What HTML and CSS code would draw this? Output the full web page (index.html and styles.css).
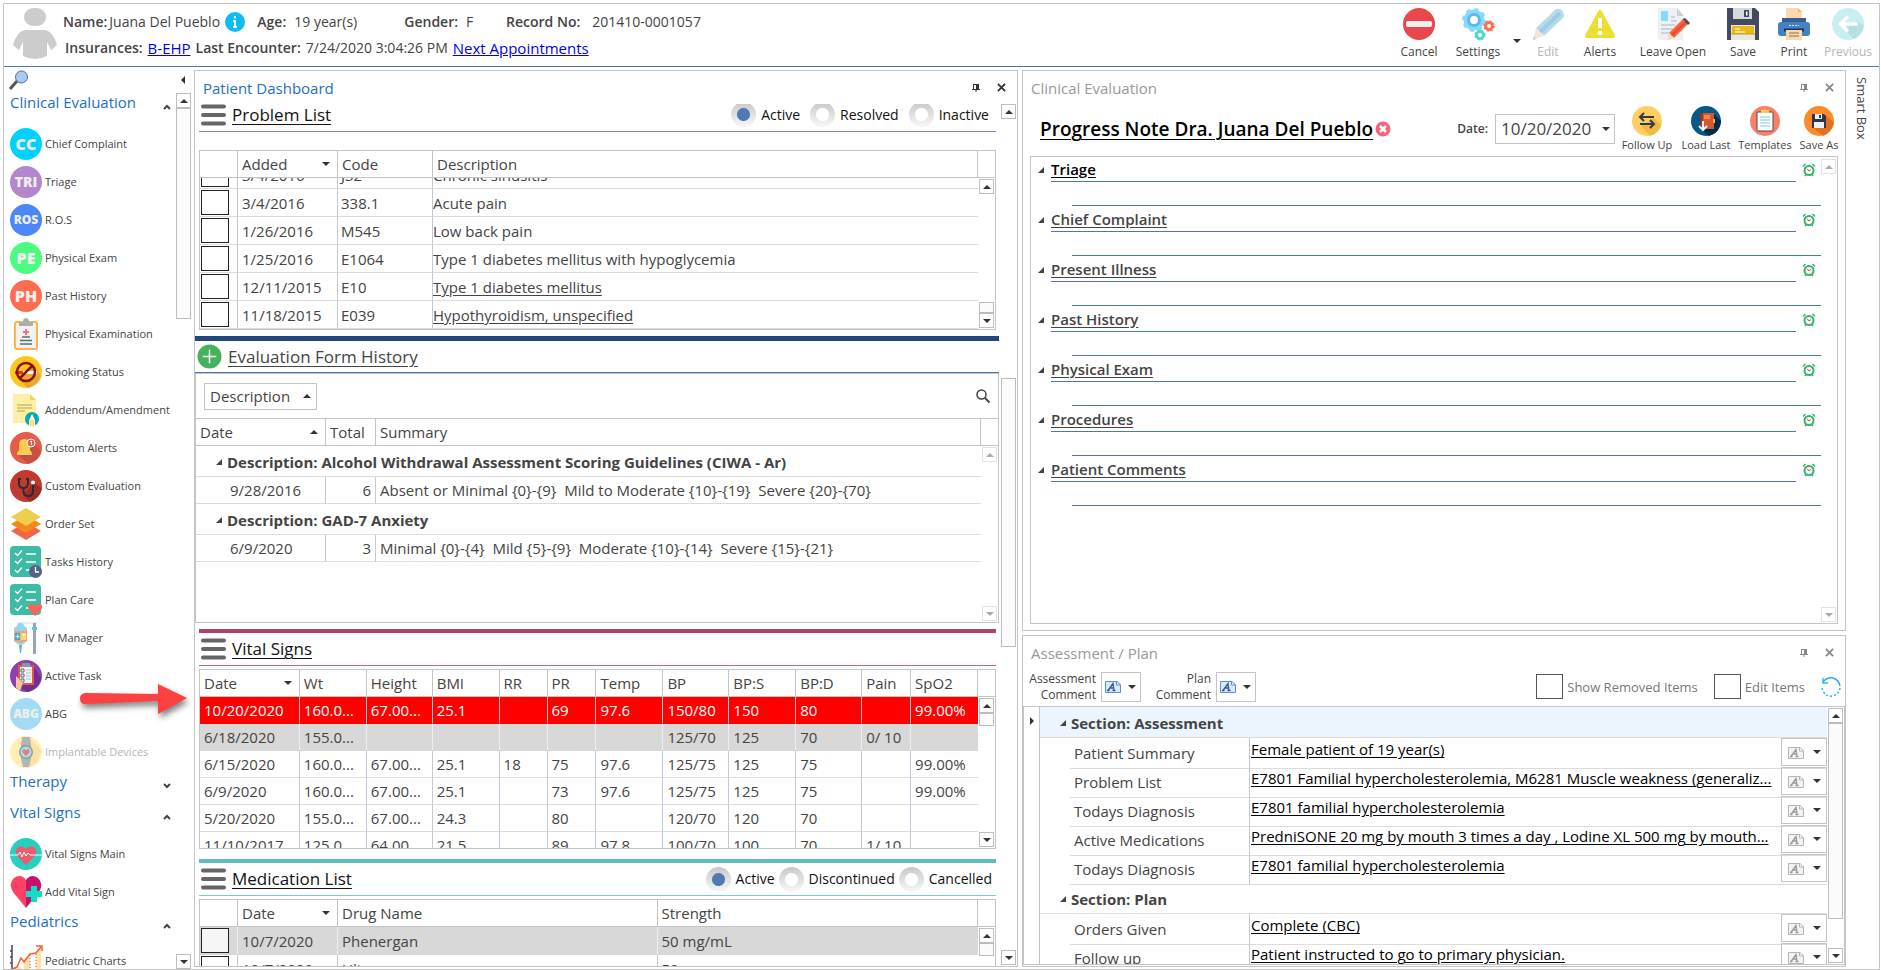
FILE: index.html
```html
<!doctype html>
<html lang="en">
  <head>
    <meta charset="UTF-8" />
    <meta name="viewport" content="width=device-width, initial-scale=1.0" />
    <title>Patient Dashboard</title>
    <link rel="stylesheet" href="styles.css">
  </head>
  <body>
    <!-- Shared icons -->
    <svg class="sprite" aria-hidden="true">
      <symbol id="i-up" viewBox="0 0 8 4"><path d="M0 4L4 0L8 4Z" /></symbol>
      <symbol id="i-down" viewBox="0 0 8 4"><path d="M0 0H8L4 4Z" /></symbol>
      <symbol id="i-open" viewBox="0 0 7 7"><path d="M7 0V7H0Z" /></symbol>
      <symbol id="i-chev-up" viewBox="0 0 8 6"><path d="M1 5L4 2L7 5" fill="none" stroke="#444" stroke-width="2" /></symbol>
      <symbol id="i-chev-down" viewBox="0 0 8 6"><path d="M1 1L4 4L7 1" fill="none" stroke="#444" stroke-width="2" /></symbol>
      <symbol id="i-pin" viewBox="0 0 8 8"><path d="M1 0H7V5H8V6H4.5V8H3.5V6H0V5H1ZM2 1V5H4V1Z" fill="currentColor" fill-rule="evenodd" /></symbol>
      <symbol id="i-close" viewBox="0 0 10 10"><path d="M1 1L9 9M9 1L1 9" stroke="currentColor" stroke-width="2" /></symbol>
      <symbol id="i-menu" viewBox="0 0 25 22"><path d="M2 2.500H23M2 11H23M2 19.500H23" stroke="#666" stroke-width="4" stroke-linecap="round" /></symbol>
      <symbol id="i-clock" viewBox="0 0 14 14">
        <circle cx="7" cy="7.500" r="4.500" fill="#fff" stroke="#35b56a" stroke-width="2" />
        <path d="M1 3.500L3.500 1M10.500 1L13 3.500M3 13L4 11.500M11 13L10 11.500" stroke="#35b56a" stroke-width="1.500" />
        <path d="M5 5.500L7 8L9 6.500" fill="none" stroke="#d9483b" />
      </symbol>
      <symbol id="i-text" viewBox="0 0 16 13">
        <path d="M.5 1.500H11.500L15.500 5V12.500H.5Z" fill="#dbe8fb" stroke="#5d8fd0" />
        <path d="M11.500 1V5H15.500Z" fill="#fff" stroke="#5d8fd0" />
        <path d="M3 10.500L8 3.500L9 10.500M5 8H8.500M2 10.500H4.500M7.500 10.500H10.500" fill="none" stroke="#31599a" stroke-width="1.300" />
      </symbol>
      <symbol id="i-text-off" viewBox="0 0 16 13">
        <path d="M.5 1.500H11.500L15.500 5V12.500H.5Z" fill="#f3f3f3" stroke="#b5b5b5" />
        <path d="M11.500 1V5H15.500Z" fill="#fff" stroke="#b5b5b5" />
        <path d="M3 10.500L8 3.500L9 10.500M5 8H8.500M2 10.500H4.500M7.500 10.500H10.500" fill="none" stroke="#999" stroke-width="1.300" />
      </symbol>
      <symbol id="i-tasks" viewBox="0 0 32 32">
        <rect width="31" height="31" rx="4" fill="#3ebba5" />
        <path d="M5 7L7.500 9.500L12 4.500M5 15L7.500 17.500L12 12.500M5 24L7.500 26.500L12 21.500M16 8H26M16 16H26M16 24H22" fill="none" stroke="#fff" stroke-width="1.300" />
      </symbol>
    </svg>

    <div class="app">
      <header class="topbar">
        <svg class="avatar" viewBox="0 0 44 51">
          <rect x="11" y="0" width="22" height="18" rx="9" fill="#ccc" />
          <path d="M12 22H32C38 23 42 30 44 37L38 42L34 34V48Q22 54 10 48V34L6 42L0 37C2 30 6 23 12 22Z" fill="#ccc" />
        </svg>
        <div class="patient">
          <div class="patient-row">
            <b>Name:</b><span class="name-value">Juana Del Pueblo</span>
            <svg class="info" viewBox="0 0 20 20"><circle cx="10" cy="10" r="10" fill="#0bbcf5" /><path d="M10 4V6.500M8 9H10V15M8 15H12" fill="none" stroke="#fff" stroke-width="2" /></svg>
            <b class="age">Age:</b><span class="age-value">19 year(s)</span>
            <b>Gender:</b><span class="gender-value">F</span>
            <b>Record No:</b><span class="record-value">201410-0001057</span>
          </div>
          <div class="patient-row wide">
            <b>Insurances:</b><a href="#">B-EHP</a>
            <b class="encounter">Last Encounter:</b><span>7/24/2020 3:04:26 PM</span>
            <a href="#">Next Appointments</a>
          </div>
        </div>
        <nav class="toolbar">
          <button class="tool w60">
            <svg viewBox="0 0 32 32"><circle cx="16" cy="16" r="16" fill="#e9474b" /><rect x="3" y="13" width="26" height="6" rx="2" fill="#f1efef" /></svg>
            Cancel
          </button>
          <button class="tool w58">
            <svg viewBox="0 0 32 32">
              <circle cx="12" cy="12" r="10.500" fill="#84dbff" /><circle cx="12" cy="12" r="10.500" fill="none" stroke="#84dbff" stroke-width="3" stroke-dasharray="4 4.250" />
              <circle cx="12" cy="12" r="5.500" fill="#fff" stroke="#5cb8ec" stroke-width="3" />
              <circle cx="27" cy="18" r="3.500" fill="#fff" stroke="#fc6f58" stroke-width="3" /><circle cx="27" cy="18" r="5" fill="none" stroke="#fc6f58" stroke-width="1.500" stroke-dasharray="2 1.900" />
              <circle cx="18" cy="27" r="3.500" fill="#fff" stroke="#4ddcc3" stroke-width="3" /><circle cx="18" cy="27" r="4.800" fill="none" stroke="#4ddcc3" stroke-width="1.500" stroke-dasharray="2 1.900" />
            </svg>
            Settings
          </button>
          <button class="tool-caret" aria-label="More settings"><svg class="tri"><use href="#i-down" /></svg></button>
          <button class="tool w42" disabled>
            <svg viewBox="0 0 32 32"><path d="M24 1Q29 0 31 4Q33 8 31 10L12 28L4 20Z" fill="#b3dbec" /><path d="M8 24L28 5" stroke="#9ecde3" stroke-width="4" /><path d="M4 20L12 28L1 32Z" fill="#f8e3dc" /><path d="M1 32L2 28L4 31Z" fill="#c5cdd5" /></svg>
            Edit
          </button>
          <button class="tool w62">
            <svg viewBox="0 0 32 32"><path d="M16 4L29 28H3Z" fill="#ecdf33" stroke="#ecdf33" stroke-width="4" stroke-linejoin="round" /><path d="M14 10H18V20H14Z" fill="#fff" /><circle cx="16" cy="25" r="2.300" fill="#fff" /></svg>
            Alerts
          </button>
          <button class="tool w84">
            <svg viewBox="0 0 32 32">
              <path d="M1 0H20L26 7V32H1Z" fill="#eef1f4" /><path d="M20 0V8H27Z" fill="#c9d1dc" /><path d="M4 3H11V13H4Z" fill="#84dbff" />
              <path d="M4 17H18M4 21H16M4 25H12M14 13H20M14 9H18" stroke="#bfcad6" stroke-width="1.500" />
              <path d="M12 25L27 10L32 15L17 30Z" fill="#f9623f" /><path d="M14 28L30 13" stroke="#e34c2c" stroke-width="2" /><path d="M12 25L17 30L10 32Z" fill="#fdd7ad" /><path d="M26 11L28 10L33 15L31 17Z" fill="#434a60" />
            </svg>
            Leave Open
          </button>
          <button class="tool w56">
            <svg viewBox="0 0 32 32"><path d="M0 0H28L32 4V32H0Z" fill="#434a60" /><path d="M6 0H25V11H6Z" fill="#d6dadd" /><path d="M17 2H22V9H17Z" fill="#434a60" /><path d="M19 3.500H20.500V7.500H19Z" fill="#fff" /><path d="M4 17H28V32H4Z" fill="#e8e8e0" /><path d="M5 18H27V26H5Z" fill="#ebb917" /><path d="M8 21H13M8 24H18" stroke="#fff" /><path d="M4 26H28" stroke="#c49a10" /></svg>
            Save
          </button>
          <button class="tool w46">
            <svg viewBox="0 0 32 32"><path d="M8 0H20L24 4V12H8Z" fill="#fdd7ad" /><path d="M20 0V4H24Z" fill="#e9b888" /><path d="M4 10H28V16H4Z" fill="#366095" /><rect y="14" width="32" height="14" rx="3" fill="#4482c3" /><path d="M11 17.500H21" stroke="#cfe2ff" stroke-dasharray="2 1" /><path d="M6 22H26" stroke="#1d3450" stroke-width="3" /><path d="M8 22H24V32H8Z" fill="#fdd7ad" /><path d="M11 25H21M11 28H21" stroke="#8c6d52" /></svg>
            Print
          </button>
          <button class="tool w62" disabled>
            <svg viewBox="0 0 32 32"><circle cx="16" cy="16" r="16" fill="#c9eef1" /><path d="M12 21L22 31Q30 27 32 18L25 13Z" fill="#b4dfe3" /><path d="M26 16H9M16 8.500L8.500 16L16 23.500" fill="none" stroke="#fff" stroke-width="3.500" /></svg>
            Previous
          </button>
        </nav>
      </header>

      <main class="workspace">
        <aside class="sidebar">
          <div class="sidebar-top">
            <svg class="search" viewBox="0 0 20 20"><path d="M1 19L8 11" stroke="#555" stroke-width="3" /><circle cx="12.500" cy="7" r="6" fill="#a5cdf9" stroke="#5b6b80" /></svg>
            <svg class="collapse" viewBox="0 0 4 8"><path d="M4 0V8L0 4Z" fill="#333" /></svg>
          </div>
          <div class="sidebar-body">
            <div class="menu">
              <button class="menu-head first">Clinical Evaluation<svg><use href="#i-chev-up" /></svg></button>
              <ul>
                <li><a href="#"><span class="badge cc">CC</span>Chief Complaint</a></li>
                <li><a href="#"><span class="badge tri-badge">TRI</span>Triage</a></li>
                <li><a href="#"><span class="badge ros">ROS</span>R.O.S</a></li>
                <li><a href="#"><span class="badge pe">PE</span>Physical Exam</a></li>
                <li><a href="#"><span class="badge ph">PH</span>Past History</a></li>
                <li><a href="#">
                  <svg viewBox="0 0 32 32"><rect x="5" y="4" width="22" height="27" rx="2" fill="#f2f2f2" stroke="#fdb44b" stroke-width="2" /><path d="M9 8V4H13Q13 0 16 0Q19 0 19 4H23V8Z" fill="#a9aeb3" /><path d="M16 11V17M13 14H19" stroke="#f2727f" stroke-width="2" /><path d="M12 19H20M10 22.500H22M10 26H22" stroke="#56707a" stroke-width="1.300" /></svg>
                  Physical Examination</a></li>
                <li><a href="#">
                  <svg viewBox="0 0 32 32"><circle cx="16" cy="16" r="16" fill="#ffc61b" /><path d="M24 9L31 20Q28 29 18 32L9 24Z" fill="#e9a72c" /><path d="M5 15H13V18H5Z" fill="#e2362b" /><path d="M13 15H27V18H13Z" fill="#fff" /><circle cx="16" cy="16" r="9" fill="none" stroke="#8c1010" stroke-width="2.500" /><path d="M10 22L22 10" stroke="#8c1010" stroke-width="2.500" /></svg>
                  Smoking Status</a></li>
                <li><a href="#">
                  <svg viewBox="0 0 32 32"><path d="M3 0H20L26 6V29H3Z" fill="#ffefa6" /><path d="M20 0V6H26Z" fill="#f3d55b" /><path d="M7 11H22M7 14H22M7 17H15" stroke="#b3a250" /><circle cx="22" cy="25" r="7" fill="#08a9a6" /><path d="M19 32V26L22 20L25 26V32Z" fill="#fff" /><path d="M20 26H24V32H20Z" fill="#ffe26a" /></svg>
                  Addendum/Amendment</a></li>
                <li><a href="#">
                  <svg viewBox="0 0 32 32"><circle cx="16" cy="16" r="16" fill="#e35d4a" /><path d="M20 8L31 19Q28 29 18 32L8 23Z" fill="#c94f43" /><path d="M7 23V21L9 18V13Q9 7 14.500 7Q20 7 20 13V18L22 21V23Z" fill="#ffcb4f" /><path d="M12 23H17Q15 27 12 23Z" fill="#5d6a80" /><circle cx="21" cy="11" r="4" fill="#e35d4a" stroke="#fff" /><path d="M20 10L21.500 9V13" fill="none" stroke="#fff" /></svg>
                  Custom Alerts</a></li>
                <li><a href="#">
                  <svg viewBox="0 0 32 32"><circle cx="16" cy="16" r="16" fill="#c13a2f" /><path d="M24 12L32 19Q29 29 20 32L13 25Z" fill="#9d2a25" /><path d="M11 9H9V13Q9 18 13.500 18Q18 18 18 13V9H16M13.500 18V22Q14 26 18.500 26Q23 26 23 21V14" fill="none" stroke="#2b2b33" stroke-width="2" /><circle cx="23" cy="12.500" r="2" fill="#fff" /></svg>
                  Custom Evaluation</a></li>
                <li><a href="#">
                  <svg viewBox="0 0 32 32"><path d="M16 14L31 23L16 32L1 23Z" fill="#f0644a" /><path d="M16 7L31 16L16 25L1 16Z" fill="#f08a1d" /><path d="M16 0L31 9L16 18L1 9Z" fill="#eecf4c" /></svg>
                  Order Set</a></li>
                <li><a href="#">
                  <svg viewBox="0 0 32 32"><use href="#i-tasks" /><circle cx="25.500" cy="25.500" r="6.500" fill="#566084" /><path d="M25.500 21V26H29" fill="none" stroke="#fff" stroke-width="1.300" /></svg>
                  Tasks History</a></li>
                <li><a href="#">
                  <svg viewBox="0 0 32 32"><use href="#i-tasks" /><path d="M25 32L19 26Q16 21 20.500 20Q23.500 19 25 22Q26.500 19 29.500 20Q34 21 31 26Z" fill="#f06a5c" /></svg>
                  Plan Care</a></li>
                <li><a href="#">
                  <svg viewBox="0 0 32 32"><path d="M7 1H28" stroke="#d5dbe0" /><path d="M23 1H26V32H23Z" fill="#9ba5b2" /><path d="M22 5H27V8H22Z" fill="#4cc7ee" /><path d="M7 4Q7 1 10.500 1Q14 1 14 4L17 6V19Q13 23 10.500 23Q8 23 4 19V6Z" fill="#8ed8f2" /><path d="M4 9H17V19Q10 22 4 19Z" fill="#f7a072" /><path d="M5 11H10.500V18H5Z" fill="#36a9d8" /><path d="M10.500 11H16V18H10.500Z" fill="#ffd96a" /><path d="M7.700 12.500V16.500M5.700 14.500H9.700M13 12.500H15" stroke="#fff" /><path d="M9 23H12L11 31H10Z" fill="#54b2da" /></svg>
                  IV Manager</a></li>
                <li><a href="#">
                  <svg viewBox="0 0 32 32"><circle cx="16" cy="16" r="16" fill="#8e3fae" /><path d="M24 7L31 18Q29 28 18 32L9 27Z" fill="#71308e" /><path d="M8 5H24V25H8Z" fill="#e2574c" /><path d="M10 7H22V23H10Z" fill="#f4f4f4" /><path d="M12 3H20V7H12Z" fill="#8b96a3" /><path d="M11 9H14V12H11ZM11 14H14V17H11ZM11 19H14V22H11Z" fill="none" stroke="#566" /><path d="M16 10H21M16 13H21M16 16H21M16 19H21" stroke="#b7bec5" /><path d="M6 16L9 19L13 23L10 31L6 28Z" fill="#f5c59b" /></svg>
                  Active Task</a></li>
                <li><a href="#"><span class="badge abg">ABG</span>ABG</a></li>
                <li><a href="#" class="off">
                  <svg viewBox="0 0 32 32"><circle cx="16" cy="16" r="16" fill="#ffefb3" /><path d="M20 2L31 14Q29 28 19 31Z" fill="#fde0a6" /><path d="M12 1H20L21 9V23L19 31H13L11 23V9Z" fill="#b4b4b4" /><circle cx="16" cy="16" r="7" fill="#92989d" /><circle cx="16" cy="16" r="5.500" fill="#9de4f4" /><path d="M16 20L12.500 16.500Q12 13 14.500 13L16 14.500L17.500 13Q20 13 19.500 16.500Z" fill="#ed7979" /></svg>
                  Implantable Devices</a></li>
              </ul>
              <button class="menu-head therapy">Therapy<svg><use href="#i-chev-down" /></svg></button>
              <button class="menu-head">Vital Signs<svg><use href="#i-chev-up" /></svg></button>
              <ul>
                <li><a href="#">
                  <svg viewBox="0 0 32 32"><circle cx="16" cy="16" r="16" fill="#27cfc0" /><path d="M16 27L8 19Q4 14 7 10Q11 6 16 11Q21 6 25 10Q28 14 24 19Z" fill="#f4596b" /><path d="M0 17H8L10 14L12 19L14 14L16 18L18 15L20 17H32" fill="none" stroke="#e8fdfb" /></svg>
                  Vital Signs Main</a></li>
                <li><a href="#">
                  <svg viewBox="0 0 32 32"><path d="M16 32L3 16Q-2 8 4 2Q11 -3 16 4Z" fill="#ff4164" /><path d="M16 32L29 16Q34 8 28 2Q21 -3 16 4Z" fill="#c5126d" /><path d="M21 10H27V15H32V21H27V26H21V21H16V15H21Z" fill="#0ee0c4" /></svg>
                  Add Vital Sign</a></li>
              </ul>
              <button class="menu-head peds">Pediatrics<svg><use href="#i-chev-up" /></svg></button>
              <ul>
                <li><a href="#">
                  <svg viewBox="0 0 32 32"><path d="M2 32V24L8 20L12 24V32ZM14 32V14L20 9V32ZM26 32V7L31 3V32Z" fill="#ffdfaa" /><path d="M2 0V32M0 6H2M0 12H2M0 18H2" stroke="#445" stroke-width="1.500" /><path d="M3 24L7 22L11 13L14 17L20 9L26 8L31 2M26 1H32V6" fill="none" stroke="#f26238" stroke-width="1.500" /><path d="M20 10V32M26 9V32" stroke="#e45a38" stroke-dasharray="1 2" /></svg>
                  Pediatric Charts</a></li>
              </ul>
            </div>
            <div class="scroll">
              <button aria-label="Scroll up"><svg class="tri"><use href="#i-up" /></svg></button>
              <i class="thumb side-thumb"></i>
              <button class="end" aria-label="Scroll down"><svg class="tri"><use href="#i-down" /></svg></button>
            </div>
          </div>
          <svg class="arrow" viewBox="0 0 112 40"><path d="M5 9Q0 10 0 14Q0 20 5 20L78 17V30L107 14L78 0V10Z" fill="#fb4141" /></svg>
        </aside>

        <section class="panel dashboard">
          <div class="panel-title active">
            <h2>Patient Dashboard</h2>
            <button aria-label="Pin"><svg class="pin"><use href="#i-pin" /></svg></button>
            <button aria-label="Close"><svg class="close"><use href="#i-close" /></svg></button>
          </div>
          <div class="dashboard-body">
            <div class="widgets">
              <section class="widget problems">
                <div class="widget-head violet">
                  <svg class="hamburger"><use href="#i-menu" /></svg>
                  <h3>Problem List</h3>
                  <div class="radios">
                    <label><input type="radio" name="problem" checked>Active</label>
                    <label><input type="radio" name="problem">Resolved</label>
                    <label><input type="radio" name="problem">Inactive</label>
                  </div>
                </div>
                <div class="grid-box problem-box">
                  <table class="grid problem-grid">
                    <thead>
                      <tr><th></th><th>Added<svg class="tri"><use href="#i-down" /></svg></th><th>Code</th><th>Description</th><th></th></tr>
                    </thead>
                    <tbody>
                      <tr><td><input type="checkbox" aria-label="Select"></td><td>3/4/2016</td><td>J32</td><td>Chronic sinusitis</td></tr>
                      <tr><td><input type="checkbox" aria-label="Select"></td><td>3/4/2016</td><td>338.1</td><td>Acute pain</td></tr>
                      <tr><td><input type="checkbox" aria-label="Select"></td><td>1/26/2016</td><td>M545</td><td>Low back pain</td></tr>
                      <tr><td><input type="checkbox" aria-label="Select"></td><td>1/25/2016</td><td>E1064</td><td>Type 1 diabetes mellitus with hypoglycemia</td></tr>
                      <tr><td><input type="checkbox" aria-label="Select"></td><td>12/11/2015</td><td>E10</td><td><u>Type 1 diabetes mellitus</u></td></tr>
                      <tr><td><input type="checkbox" aria-label="Select"></td><td>11/18/2015</td><td>E039</td><td><u>Hypothyroidism, unspecified</u></td></tr>
                    </tbody>
                  </table>
                  <div class="scroll">
                    <button aria-label="Scroll up"><svg class="tri"><use href="#i-up" /></svg></button>
                    <i class="thumb low-thumb"></i>
                    <button aria-label="Scroll down"><svg class="tri"><use href="#i-down" /></svg></button>
                  </div>
                </div>
              </section>

              <section class="widget evaluation">
                <div class="widget-head blue">
                  <svg class="plus" viewBox="0 0 26 26"><circle cx="13" cy="13" r="12.500" fill="#45b25d" /><path d="M13 6V20M6 13H20" stroke="#fff" stroke-width="1.500" /></svg>
                  <h3>Evaluation Form History</h3>
                </div>
                <div class="grid-box eval-box">
                  <div class="group-bar">
                    <button class="group-by">Description<svg class="tri"><use href="#i-up" /></svg></button>
                    <svg class="find" viewBox="0 0 14 14"><circle cx="5.500" cy="5.500" r="4.500" fill="none" stroke="#444" stroke-width="1.500" /><path d="M9 9L13.500 13.500" stroke="#444" stroke-width="2" /></svg>
                  </div>
                  <div class="grid-wrap">
                    <table class="grid eval-grid">
                      <thead>
                        <tr><th>Date<svg class="tri"><use href="#i-up" /></svg></th><th>Total</th><th>Summary</th><th></th></tr>
                      </thead>
                      <tbody>
                        <tr class="group"><th colspan="3"><svg class="open"><use href="#i-open" /></svg>Description: Alcohol Withdrawal Assessment Scoring Guidelines (CIWA - Ar)</th></tr>
                        <tr><td>9/28/2016</td><td>6</td><td>Absent or Minimal {0}-{9}&nbsp; Mild to Moderate {10}-{19}&nbsp; Severe {20}-{70}</td></tr>
                        <tr class="group"><th colspan="3"><svg class="open"><use href="#i-open" /></svg>Description: GAD-7 Anxiety</th></tr>
                        <tr><td>6/9/2020</td><td>3</td><td>Minimal {0}-{4}&nbsp; Mild {5}-{9}&nbsp; Moderate {10}-{14}&nbsp; Severe {15}-{21}</td></tr>
                      </tbody>
                    </table>
                    <div class="scroll off">
                      <button disabled aria-label="Scroll up"><svg class="tri"><use href="#i-up" /></svg></button>
                      <button class="end" disabled aria-label="Scroll down"><svg class="tri"><use href="#i-down" /></svg></button>
                    </div>
                  </div>
                </div>
              </section>

              <section class="widget vitals">
                <div class="widget-head pink">
                  <svg class="hamburger"><use href="#i-menu" /></svg>
                  <h3>Vital Signs</h3>
                </div>
                <div class="grid-box vital-box">
                  <table class="grid vital-grid">
                    <thead>
                      <tr><th>Date<svg class="tri"><use href="#i-down" /></svg></th><th>Wt</th><th>Height</th><th>BMI</th><th>RR</th><th>PR</th><th>Temp</th><th>BP</th><th>BP:S</th><th>BP:D</th><th>Pain</th><th>SpO2</th><th></th></tr>
                    </thead>
                    <tbody>
                      <tr class="alert"><td>10/20/2020</td><td>160.0...</td><td>67.00...</td><td>25.1</td><td></td><td>69</td><td>97.6</td><td>150/80</td><td>150</td><td>80</td><td></td><td>99.00%</td></tr>
                      <tr class="selected"><td>6/18/2020</td><td>155.0...</td><td></td><td></td><td></td><td></td><td></td><td>125/70</td><td>125</td><td>70</td><td>0/ 10</td><td></td></tr>
                      <tr><td>6/15/2020</td><td>160.0...</td><td>67.00...</td><td>25.1</td><td>18</td><td>75</td><td>97.6</td><td>125/75</td><td>125</td><td>75</td><td></td><td>99.00%</td></tr>
                      <tr><td>6/9/2020</td><td>160.0...</td><td>67.00...</td><td>25.1</td><td></td><td>73</td><td>97.6</td><td>125/75</td><td>125</td><td>75</td><td></td><td>99.00%</td></tr>
                      <tr><td>5/20/2020</td><td>155.0...</td><td>67.00...</td><td>24.3</td><td></td><td>80</td><td></td><td>120/70</td><td>120</td><td>70</td><td></td><td></td></tr>
                      <tr><td>11/10/2017</td><td>125.0...</td><td>64.00...</td><td>21.5</td><td></td><td>89</td><td>97.8</td><td>100/70</td><td>100</td><td>70</td><td>1/ 10</td><td></td></tr>
                    </tbody>
                  </table>
                  <div class="scroll">
                    <button aria-label="Scroll up"><svg class="tri"><use href="#i-up" /></svg></button>
                    <i class="thumb short-thumb"></i>
                    <button class="end" aria-label="Scroll down"><svg class="tri"><use href="#i-down" /></svg></button>
                  </div>
                </div>
              </section>

              <section class="widget medication">
                <div class="widget-head teal">
                  <svg class="hamburger"><use href="#i-menu" /></svg>
                  <h3>Medication List</h3>
                  <div class="radios tight">
                    <label><input type="radio" name="medication" checked>Active</label>
                    <label><input type="radio" name="medication">Discontinued</label>
                    <label><input type="radio" name="medication">Cancelled</label>
                  </div>
                </div>
                <div class="grid-box med-box">
                  <table class="grid med-grid">
                    <thead>
                      <tr><th></th><th>Date<svg class="tri"><use href="#i-down" /></svg></th><th>Drug Name</th><th>Strength</th><th></th></tr>
                    </thead>
                    <tbody>
                      <tr class="selected"><td><input type="checkbox" aria-label="Select"></td><td>10/7/2020</td><td>Phenergan</td><td>50 mg/mL</td></tr>
                      <tr><td><input type="checkbox" aria-label="Select"></td><td>10/7/2020</td><td>Ultram</td><td>50 mg</td></tr>
                    </tbody>
                  </table>
                  <div class="scroll">
                    <button aria-label="Scroll up"><svg class="tri"><use href="#i-up" /></svg></button>
                    <i class="thumb short-thumb"></i>
                  </div>
                </div>
              </section>
            </div>
            <div class="scroll">
              <button aria-label="Scroll up"><svg class="tri"><use href="#i-up" /></svg></button>
              <i class="thumb dash-thumb"></i>
              <button class="end" aria-label="Scroll down"><svg class="tri"><use href="#i-down" /></svg></button>
            </div>
          </div>
        </section>

        <div class="right">
          <section class="panel note">
            <div class="panel-title">
              <h2>Clinical Evaluation</h2>
              <button aria-label="Pin"><svg class="pin"><use href="#i-pin" /></svg></button>
              <button aria-label="Close"><svg class="close"><use href="#i-close" /></svg></button>
            </div>
            <div class="note-head">
              <h1>Progress Note Dra. Juana Del Pueblo</h1>
              <svg class="remove" viewBox="0 0 16 16"><circle cx="8" cy="8" r="7.500" fill="#fb6179" /><path d="M5 5L11 11M11 5L5 11" stroke="#fff" stroke-width="2.500" /></svg>
              <label class="date-label" for="note-date">Date:</label>
              <div class="date-field">
                <select id="note-date"><option>10/20/2020</option></select>
                <svg class="tri"><use href="#i-down" /></svg>
              </div>
              <div class="note-tools">
                <button class="mini w60">
                  <svg viewBox="0 0 30 30"><circle cx="15" cy="15" r="15" fill="#ffd061" /><path d="M22 12L29 19Q27 27 18 30L9 20Z" fill="#f0b844" /><path d="M22 11H9M12 7L8 11L12 15M8 18H21M18 14L22 18L18 22" fill="none" stroke="#30384c" stroke-width="2" /></svg>
                  Follow Up
                </button>
                <button class="mini w58">
                  <svg viewBox="0 0 30 30"><circle cx="15" cy="15" r="15" fill="#035a83" /><path d="M22 7L30 15Q29 27 18 30L9 23Z" fill="#022d48" /><path d="M10 7H23V23H10Z" fill="#d45833" /><path d="M9 7H12V23H9Z" fill="#8e3a25" /><path d="M13 10H19M13 12H19" stroke="#ffc94f" /><path d="M23 13V17" stroke="#f0b844" stroke-width="2" /><path d="M12 15V24M8 20L12 24L16 20" fill="none" stroke="#e8f6ff" stroke-width="2" /></svg>
                  Load Last
                </button>
                <button class="mini w60">
                  <svg viewBox="0 0 30 30"><circle cx="15" cy="15" r="15" fill="#fb8068" /><rect x="7" y="6" width="16" height="19" rx="1" fill="#fff" stroke="#454b59" /><path d="M11 7V4H14L15 2L16 4H19V7Z" fill="#ffc94f" /><path d="M10 11H20M10 14H20M10 17H20M10 20H20" stroke="#a9daf2" stroke-width="1.500" /></svg>
                  Templates
                </button>
                <button class="mini w48">
                  <svg viewBox="0 0 30 30"><circle cx="15" cy="15" r="15" fill="#fd8b2c" /><path d="M22 9L30 17Q27 27 19 30L9 22Z" fill="#e2701c" /><path d="M8 8H20L22 10V22H8Z" fill="#303848" /><path d="M11 8H18V13H11ZM10 16H20V22H10Z" fill="#eef2f5" /><path d="M15 9H17V12H15Z" fill="#303848" /></svg>
                  Save As
                </button>
              </div>
            </div>
            <div class="note-body">
              <ul class="sections">
                <li class="current"><div><svg class="open"><use href="#i-open" /></svg><a href="#">Triage</a><svg class="clock"><use href="#i-clock" /></svg></div></li>
                <li><div><svg class="open"><use href="#i-open" /></svg><a href="#">Chief Complaint</a><svg class="clock"><use href="#i-clock" /></svg></div></li>
                <li><div><svg class="open"><use href="#i-open" /></svg><a href="#">Present Illness</a><svg class="clock"><use href="#i-clock" /></svg></div></li>
                <li><div><svg class="open"><use href="#i-open" /></svg><a href="#">Past History</a><svg class="clock"><use href="#i-clock" /></svg></div></li>
                <li><div><svg class="open"><use href="#i-open" /></svg><a href="#">Physical Exam</a><svg class="clock"><use href="#i-clock" /></svg></div></li>
                <li><div><svg class="open"><use href="#i-open" /></svg><a href="#">Procedures</a><svg class="clock"><use href="#i-clock" /></svg></div></li>
                <li><div><svg class="open"><use href="#i-open" /></svg><a href="#">Patient Comments</a><svg class="clock"><use href="#i-clock" /></svg></div></li>
              </ul>
              <div class="scroll off">
                <button disabled aria-label="Scroll up"><svg class="tri"><use href="#i-up" /></svg></button>
                <button class="end" disabled aria-label="Scroll down"><svg class="tri"><use href="#i-down" /></svg></button>
              </div>
            </div>
          </section>

          <section class="panel plan">
            <div class="panel-title">
              <h2>Assessment / Plan</h2>
              <button aria-label="Pin"><svg class="pin"><use href="#i-pin" /></svg></button>
              <button aria-label="Close"><svg class="close"><use href="#i-close" /></svg></button>
            </div>
            <div class="plan-tools">
              <span class="comment-label">Assessment Comment</span>
              <button class="text-btn" aria-label="Assessment comment"><svg class="txt"><use href="#i-text" /></svg><svg class="tri"><use href="#i-down" /></svg></button>
              <span class="comment-label second">Plan Comment</span>
              <button class="text-btn" aria-label="Plan comment"><svg class="txt"><use href="#i-text" /></svg><svg class="tri"><use href="#i-down" /></svg></button>
              <label class="check removed"><input type="checkbox">Show Removed Items</label>
              <label class="check"><input type="checkbox">Edit Items</label>
              <svg class="refresh" viewBox="0 0 20 20"><path d="M2 5Q6 0 12 1Q18 3 19 9" fill="none" stroke="#2fa9ee" stroke-width="1.500" /><path d="M2 1V6H7" fill="none" stroke="#22c4f4" stroke-width="1.500" /><path d="M19 11Q18 17 12 19Q5 20 2 14Q1 12 1 10" fill="none" stroke="#22b4f4" stroke-width="1.500" stroke-dasharray="2 2" /></svg>
            </div>
            <div class="plan-body">
              <div class="indicator"><svg viewBox="0 0 4 8"><path d="M0 0L4 4L0 8Z" fill="#333" /></svg></div>
              <table class="plan-grid">
                <tbody>
                  <tr class="group current"><th colspan="3"><svg class="open"><use href="#i-open" /></svg>Section: Assessment</th></tr>
                  <tr><td>Patient Summary</td><td><a href="#">Female patient of 19 year(s)</a></td><td><button class="cell-btn" aria-label="Comment"><svg class="txt"><use href="#i-text-off" /></svg><svg class="tri"><use href="#i-down" /></svg></button></td></tr>
                  <tr><td>Problem List</td><td><a href="#">E7801 Familial hypercholesterolemia, M6281 Muscle weakness (generaliz...</a></td><td><button class="cell-btn" aria-label="Comment"><svg class="txt"><use href="#i-text-off" /></svg><svg class="tri"><use href="#i-down" /></svg></button></td></tr>
                  <tr><td>Todays Diagnosis</td><td><a href="#">E7801 familial hypercholesterolemia</a></td><td><button class="cell-btn" aria-label="Comment"><svg class="txt"><use href="#i-text-off" /></svg><svg class="tri"><use href="#i-down" /></svg></button></td></tr>
                  <tr><td>Active Medications</td><td><a href="#">PredniSONE 20 mg by mouth 3 times a day , Lodine XL 500 mg by mouth...</a></td><td><button class="cell-btn" aria-label="Comment"><svg class="txt"><use href="#i-text-off" /></svg><svg class="tri"><use href="#i-down" /></svg></button></td></tr>
                  <tr class="last"><td>Todays Diagnosis</td><td><a href="#">E7801 familial hypercholesterolemia</a></td><td><button class="cell-btn" aria-label="Comment"><svg class="txt"><use href="#i-text-off" /></svg><svg class="tri"><use href="#i-down" /></svg></button></td></tr>
                  <tr class="group"><th colspan="3"><svg class="open"><use href="#i-open" /></svg>Section: Plan</th></tr>
                  <tr><td>Orders Given</td><td><a href="#">Complete (CBC)</a></td><td><button class="cell-btn" aria-label="Comment"><svg class="txt"><use href="#i-text-off" /></svg><svg class="tri"><use href="#i-down" /></svg></button></td></tr>
                  <tr><td>Follow up</td><td><a href="#">Patient instructed to go to primary physician.</a></td><td><button class="cell-btn" aria-label="Comment"><svg class="txt"><use href="#i-text-off" /></svg><svg class="tri"><use href="#i-down" /></svg></button></td></tr>
                </tbody>
              </table>
              <div class="scroll">
                <button aria-label="Scroll up"><svg class="tri"><use href="#i-up" /></svg></button>
                <i class="thumb plan-thumb"></i>
                <button class="end" aria-label="Scroll down"><svg class="tri"><use href="#i-down" /></svg></button>
              </div>
            </div>
          </section>
        </div>

        <div class="smart-box">Smart Box</div>
      </main>
    </div>
  </body>
</html>
```
FILE: styles.css
```css
/* Global Styles */
* {
  box-sizing: border-box;
}

body {
  margin: 0;
  height: 100vh;
  padding: 3px 1px 0 3px;
  font-family: "Segoe UI", "Open Sans", "Noto Sans", sans-serif;
  font-size: 15px;
  line-height: 20px;
  color: #444;
  background-color: #fff;
  overflow: hidden;
}

h1,
h2,
h3 {
  margin: 0;
  font-weight: normal;
}

ul {
  list-style: none;
  margin: 0;
  padding: 0;
}

button {
  font: inherit;
  color: inherit;
  background: none;
  border: none;
  padding: 0;
}

svg {
  flex: none;
  overflow: visible;
}

.sprite {
  display: none;
}

.tri {
  width: 8px;
  height: 4px;
  fill: #333;
}

.open {
  width: 6px;
  height: 6px;
  fill: #444;
}

.app {
  height: 100%;
  display: flex;
  flex-direction: column;
  border: 1px solid #c4c4c4;
}

/* Top bar */
.topbar {
  display: flex;
  height: 63px;
  flex: none;
  border-bottom: 1px solid #4a77b0;
}

.avatar {
  width: 38px;
  height: 51px;
  margin: 4px 0 0 9px;
}

.avatar {
  width: 44px;
}

.patient {
  flex: 1;
  padding: 5px 0 0 6px;
  font-size: 14px;
}

.patient b {
  font-weight: 600;
}

.patient-row {
  display: flex;
  align-items: center;
  height: 26px;
  white-space: nowrap;
  gap: 2px;
}

.patient-row.wide {
  gap: 5px;
  padding-left: 2px;
}

.patient a {
  color: #0000f0;
  font-size: 15px;
}

.patient a + b {
  margin-left: 0;
}

.name-value {
  width: 114px;
}

.info {
  width: 20px;
  height: 20px;
}

.age {
  margin-left: 10px;
}

.age-value {
  width: 114px;
  padding-left: 6px;
}

.gender-value {
  width: 44px;
  padding-left: 6px;
}

.record-value {
  padding-left: 10px;
}

.toolbar {
  display: flex;
  padding-top: 4px;
}

.tool,
.mini {
  display: flex;
  flex-direction: column;
  align-items: center;
  white-space: nowrap;
  font-size: 12px;
}

.tool svg {
  width: 32px;
  height: 32px;
  margin-bottom: 2px;
}

.tool:disabled {
  color: #b5b5b5;
}

.tool-caret {
  width: 20px;
}

.w42 { width: 42px; }
.w46 { width: 46px; }
.w48 { width: 48px; }
.w56 { width: 56px; }
.w58 { width: 58px; }
.w60 { width: 60px; }
.w62 { width: 62px; }
.w84 { width: 84px; }

.workspace {
  flex: 1;
  min-height: 0;
  display: grid;
  grid-template-columns: 190px 824fr 828fr 33px;
}

/* Scroll bars */
.scroll {
  display: flex;
  flex-direction: column;
  width: 15px;
  flex: none;
}

.scroll button {
  display: flex;
  align-items: center;
  justify-content: center;
  height: 15px;
  border: 1px solid #bdbdbd;
  background-color: #fff;
}

.scroll .end {
  margin-top: auto;
}

.scroll.off button {
  border-color: #e2e2e2;
}

.scroll.off .tri {
  fill: #aaa;
}

.thumb {
  border: 1px solid #bdbdbd;
  background-color: #fbfbfb;
}

.side-thumb { height: 211px; }
.dash-thumb { height: 269px; margin-top: 259px; }
.low-thumb { height: 11px; margin-top: auto; }
.short-thumb { height: 13px; }
.plan-thumb { height: 196px; }

/* Sidebar */
.sidebar {
  position: relative;
  display: flex;
  flex-direction: column;
  min-height: 0;
}

.sidebar-top {
  display: flex;
  justify-content: space-between;
  align-items: center;
  height: 24px;
  padding: 2px 9px 0 5px;
}

.search {
  width: 20px;
  height: 20px;
}

.collapse {
  width: 4px;
  height: 8px;
}

.sidebar-body {
  flex: 1;
  min-height: 0;
  display: flex;
  padding-top: 2px;
}

.sidebar-body .scroll {
  margin-right: 3px;
}

.menu {
  flex: 1;
  overflow: hidden;
  padding-left: 6px;
}

.menu-head {
  display: flex;
  align-items: center;
  justify-content: space-between;
  width: 100%;
  height: 34px;
  padding: 0 5px 4px 0;
  color: #1c6fc0;
}

.menu-head svg {
  width: 8px;
  height: 6px;
  margin-top: 10px;
}

.menu-head.first {
  height: 32px;
  padding-bottom: 14px;
}

.menu-head.therapy {
  height: 26px;
  padding-bottom: 6px;
}

.menu-head + ul {
  padding-top: 4px;
}

.menu-head.first + ul {
  padding-top: 0;
}

.menu-head.peds {
  height: 27px;
  padding-bottom: 7px;
}

.menu li a {
  display: flex;
  align-items: center;
  gap: 3px;
  height: 38px;
  font-size: 11px;
  white-space: nowrap;
  color: #444;
  text-decoration: none;
}

.menu li svg {
  width: 32px;
  height: 32px;
}

.menu li .off {
  color: #b5b5b5;
}

.badge {
  width: 32px;
  height: 32px;
  flex: none;
  border-radius: 50%;
  text-align: center;
  font-weight: 800;
  font-size: 12px;
  line-height: 32px;
  color: #eee;
}

.cc { background-color: #00d2ff; font-size: 16px; }
.tri-badge { background-color: #b386cd; font-size: 14px; }
.ros { background-color: #4c86fb; }
.pe { background-color: #4dfb80; font-size: 16px; }
.ph { background-color: #ff6c50; font-size: 16px; }
.abg { background-color: #a4dbf4; }

.arrow {
  position: absolute;
  left: 76px;
  top: 617px;
  width: 112px;
  height: 40px;
  filter: drop-shadow(2px 4px 3px rgba(0, 0, 0, 0.5));
}

/* Panels */
.panel {
  border: 1px solid #c4c4c4;
  display: flex;
  flex-direction: column;
  min-height: 0;
  min-width: 0;
}

.panel-title {
  display: flex;
  align-items: center;
  height: 33px;
  flex: none;
  padding: 0 11px 0 8px;
  gap: 17px;
  color: #888;
}

.panel-title h2 {
  flex: 1;
  font-size: 15px;
  color: #999;
}

.panel-title.active,
.panel-title.active h2 {
  color: #333;
}

.panel-title.active h2 {
  color: #1c6fc0;
}

.panel-title button {
  display: flex;
}

.pin {
  width: 8px;
  height: 8px;
}

.close {
  width: 9px;
  height: 9px;
}

.dashboard {
  margin: 3px 0 2px;
}

.dashboard-body {
  flex: 1;
  min-height: 0;
  display: flex;
}

.dashboard-body > .scroll {
  margin: 0 1px 1px;
}

.widgets {
  flex: 1;
  min-width: 0;
  display: flex;
  flex-direction: column;
  overflow: hidden;
}

.widget {
  flex: none;
  margin: 0 4px;
}

.widget-head {
  display: flex;
  align-items: center;
  height: 33px;
  gap: 6px;
  padding-left: 2px;
  border-bottom: 1px solid #7f7fc8;
}

.widget-head h3 {
  font-size: 17px;
  line-height: 24px;
  color: #111;
  text-decoration: underline;
  text-underline-offset: 3px;
  text-decoration-thickness: 1px;
}

.hamburger {
  width: 25px;
  height: 22px;
}

.radios {
  display: flex;
  gap: 10px;
  margin-left: auto;
  padding-right: 7px;
  font-size: 14px;
  color: #111;
}

.radios label {
  display: flex;
  align-items: center;
  gap: 5px;
}

.radios.tight {
  gap: 4px;
  padding-right: 4px;
}

.radios input {
  appearance: none;
  width: 25px;
  height: 25px;
  margin: 0;
  border-radius: 50%;
  background: radial-gradient(circle, #fff 6px, transparent 7px), linear-gradient(#c8c8c8, #f8f8f8);
}

.radios input:checked {
  background: radial-gradient(circle, #5079b3 6px, transparent 7px), linear-gradient(#c8c8c8, #f8f8f8);
}

.problems .widget-head {
  height: 28px;
  padding-bottom: 6px;
}

.problems {
  height: 232px;
}

.evaluation {
  margin: 0 1px 0 0;
  border-top: 5px solid #21477d;
}

.blue {
  height: 32px;
  padding-left: 2px;
  border-bottom-color: #4a77b0;
}

.blue h3 {
  color: #444;
}

.plus {
  width: 25px;
  height: 25px;
}

.vitals {
  margin-top: 6px;
  border-top: 4px solid #b64063;
}

.pink {
  border-bottom-color: #c4688a;
}

.medication {
  margin-top: 10px;
  border-top: 4px solid #62bcbc;
}

.teal {
  border-bottom-color: #7cc9c9;
}

/* Data grids */
.grid-box {
  border: 1px solid #c4c4c4;
}

.problem-box,
.vital-box,
.med-box,
.grid-wrap {
  display: grid;
  grid-template-rows: minmax(0, 1fr);
}

.grid,
.grid-box .scroll {
  grid-area: 1 / 1;
}

.grid-box .scroll {
  justify-self: end;
  margin: 28px 1px 1px 0;
}

.problem-box {
  height: 180px;
  margin-top: 18px;
}

.vital-box {
  height: 180px;
  margin-top: 3px;
}

.med-box {
  height: 90px;
  margin-top: 3px;
}

.grid {
  display: flex;
  flex-direction: column;
  min-width: 0;
}

.grid thead {
  flex: none;
}

.grid tbody {
  flex: 1;
  min-height: 0;
  overflow: hidden;
  display: flex;
  flex-direction: column;
  margin-right: 17px;
}

.grid tr {
  display: grid;
  flex: none;
  height: 27px;
}

.problem-grid tbody {
  justify-content: flex-end;
}

.problem-grid tbody tr,
.med-grid tbody tr {
  height: 28px;
}

.problem-grid tr { grid-template-columns: 38px 100px 95px 1fr; }
.problem-grid thead tr { grid-template-columns: 38px 100px 95px 1fr 17px; }
.eval-grid tr { grid-template-columns: 130px 50px 1fr; }
.eval-grid thead tr { grid-template-columns: 130px 50px 1fr 17px; }
.vital-grid tr { grid-template-columns: 100fr 67fr 66fr 67fr 48fr 49fr 67fr 66fr 67fr 66fr 49fr 67fr; }
.vital-grid thead tr { grid-template-columns: 100fr 67fr 66fr 67fr 48fr 49fr 67fr 66fr 67fr 66fr 49fr 67fr 17px; }
.med-grid tr { grid-template-columns: 38px 100px 320fr 321fr; }
.med-grid thead tr { grid-template-columns: 38px 100px 320fr 321fr 17px; }

.grid th,
.grid td {
  display: flex;
  align-items: center;
  min-width: 0;
  padding: 0 4px;
  border-right: 1px solid #c0cad8;
  border-bottom: 1px solid #dcdcdc;
  font-weight: normal;
  white-space: nowrap;
  overflow: hidden;
}

.grid th {
  border-color: #c4c4c4;
}

.grid thead th {
  justify-content: space-between;
}

.grid thead .tri {
  margin-right: 3px;
}

.grid th:last-child,
.grid td:last-child {
  border-right: none;
}

.problem-grid td:last-child {
  padding-left: 0;
}

.problem-grid td:nth-child(3) {
  padding-left: 3px;
}

.problem-grid td:first-child,
.med-grid td:first-child {
  padding: 0 1px;
}

.grid input {
  appearance: none;
  width: 28px;
  height: 25px;
  margin: 0;
  border: 1px solid #222;
  background-color: #fff;
}

.grid u {
  text-underline-offset: 2px;
}

.grid .selected {
  background-color: #d8d8d8;
}

.grid .selected td {
  border-color: #eee #eee #d8d8d8;
}

.selected input {
  background-color: #f6f6f6;
}

.grid .alert {
  background-color: #f00;
  color: #fff;
}

.grid .alert td {
  border-bottom-color: #f00;
}

.eval-box {
  height: 250px;
  display: flex;
  flex-direction: column;
}

.group-bar {
  display: flex;
  align-items: center;
  justify-content: space-between;
  height: 45px;
  padding: 0 8px;
  border-bottom: 1px solid #c4c4c4;
}

.group-by {
  display: flex;
  align-items: center;
  gap: 13px;
  height: 27px;
  padding: 0 5px;
  border: 1px solid #c4c4c4;
}

.find {
  width: 14px;
  height: 14px;
}

.grid-wrap {
  flex: 1;
  min-height: 0;
}

.eval-grid .group {
  display: flex;
  height: 31px;
}

.eval-grid .group th {
  flex: 1;
  gap: 5px;
  padding: 2px 0 0 20px;
  border-color: #dcdcdc;
  font-weight: bold;
}

.eval-grid td:first-child {
  padding-left: 34px;
}

.eval-grid td:nth-child(2) {
  justify-content: flex-end;
}

/* Right column */
.right {
  display: flex;
  flex-direction: column;
  gap: 4px;
  min-height: 0;
  margin: 3px 0 2px 4px;
}

.note {
  flex: 562 1 0;
}

.plan {
  flex: 331 1 0;
}

.note-head {
  display: flex;
  align-items: center;
  height: 52px;
  flex: none;
  padding: 0 2px 2px 17px;
}

.note-head h1 {
  font-size: 19px;
  font-weight: 600;
  line-height: 24px;
  color: #000;
  white-space: nowrap;
  text-decoration: underline;
  text-decoration-thickness: 1px;
  text-underline-offset: 3px;
}

.remove {
  width: 16px;
  height: 16px;
  margin-left: 2px;
}

.date-label {
  margin-left: auto;
  font-size: 12px;
  font-weight: 600;
}

.date-field {
  display: grid;
  align-items: center;
  margin-left: 7px;
}

.date-field > * {
  grid-area: 1 / 1;
}

.date-field .tri {
  justify-self: end;
  margin-right: 5px;
  pointer-events: none;
}

.date-field select {
  appearance: none;
  width: 120px;
  height: 30px;
  padding: 0 5px;
  border: 1px solid #c4c4c4;
  border-radius: 0;
  background-color: #fff;
  font: inherit;
  font-size: 17px;
  color: #444;
}

.note-tools {
  display: flex;
  margin-left: 2px;
}

.mini {
  font-size: 11px;
  line-height: 16px;
}

.mini svg {
  width: 30px;
  height: 30px;
  margin-bottom: 1px;
}

.note-body {
  flex: 1;
  min-height: 0;
  display: flex;
  margin: 0 7px 6px;
  border: 1px solid #c4c4c4;
}

.note-body .scroll {
  margin: 2px 1px 1px 0;
}

.sections {
  flex: 1;
}

/* each section is a heading line plus an indented empty line */
.sections li {
  height: 50px;
}

.sections div {
  display: flex;
  align-items: center;
  height: 25px;
  padding-left: 7px;
  gap: 7px;
}

.sections a {
  flex: 1;
  font-weight: 600;
  line-height: 24px;
  color: #444;
  border-bottom: 1px solid #4a77b0;
  text-underline-offset: 2px;
}

.sections .current a {
  color: #000;
}

.sections li::after {
  content: "";
  display: block;
  height: 23px;
  margin-left: 41px;
  border-bottom: 1px solid #4a77b0;
}

.clock {
  width: 14px;
  height: 14px;
  margin: 0 5px 0 -1px;
}

/* Assessment / plan */
.plan-tools {
  display: flex;
  align-items: center;
  height: 37px;
  flex: none;
  padding: 0 4px 2px;
}

.comment-label {
  width: 69px;
  font-size: 12px;
  line-height: 16px;
  text-align: right;
}

.comment-label.second {
  margin-left: 1px;
}

.text-btn,
.cell-btn {
  display: flex;
  align-items: center;
  justify-content: space-between;
  border: 1px solid #c4c4c4;
}

.text-btn {
  width: 40px;
  height: 30px;
  margin-left: 5px;
  padding: 0 4px 0 3px;
}

.txt {
  width: 16px;
  height: 13px;
}

.check {
  display: flex;
  align-items: center;
  gap: 4px;
  margin-right: 16px;
  font-size: 13px;
  color: #777;
}

.check.removed {
  margin-left: auto;
}

.check input {
  appearance: none;
  width: 27px;
  height: 25px;
  margin: 0;
  border: 1px solid #555;
}

.refresh {
  width: 20px;
  height: 20px;
}

.plan-body {
  flex: 1;
  min-height: 0;
  display: flex;
  overflow: hidden;
  border: 1px solid #c4c4c4;
  margin-bottom: 1px;
}

.plan-body .scroll {
  margin: 1px 1px 1px 1px;
}

.indicator {
  width: 16px;
  flex: none;
  padding: 10px 0 0 6px;
  border-right: 1px solid #c4c4c4;
}

.indicator svg {
  display: block;
  width: 4px;
  height: 8px;
}

.plan-grid,
.plan-grid tbody {
  display: block;
  flex: 1;
  min-width: 0;
}

.plan-grid tr {
  display: grid;
  grid-template-columns: 179px 1fr 46px;
  height: 29px;
  margin-left: 30px;
}

.plan-grid td {
  padding: 0 4px;
  min-width: 0;
  line-height: 30px;
  border-bottom: 1px solid #dcdcdc;
  white-space: nowrap;
}

.plan-grid td:nth-child(2) {
  padding: 0 0 0 1px;
  line-height: 22px;
  overflow: hidden;
  border-left: 1px solid #c0cad8;
}

.plan-grid td:nth-child(3) {
  padding: 0;
  line-height: 0;
}

.plan-grid a {
  color: #000;
  text-underline-offset: 2px;
}

.plan-grid .group {
  display: flex;
  height: 31px;
  margin-left: 0;
}

.plan-grid .group th {
  flex: 1;
  display: flex;
  align-items: center;
  gap: 5px;
  padding: 2px 0 0 20px;
  border-bottom: 1px solid #dcdcdc;
}

.plan-grid .current {
  background-color: #ecf4fd;
}

.cell-btn {
  width: 46px;
  height: 28px;
  padding: 0 5px 0 6px;
}

.smart-box {
  writing-mode: vertical-rl;
  padding: 10px 7px 0;
  font-size: 13px;
}
```
